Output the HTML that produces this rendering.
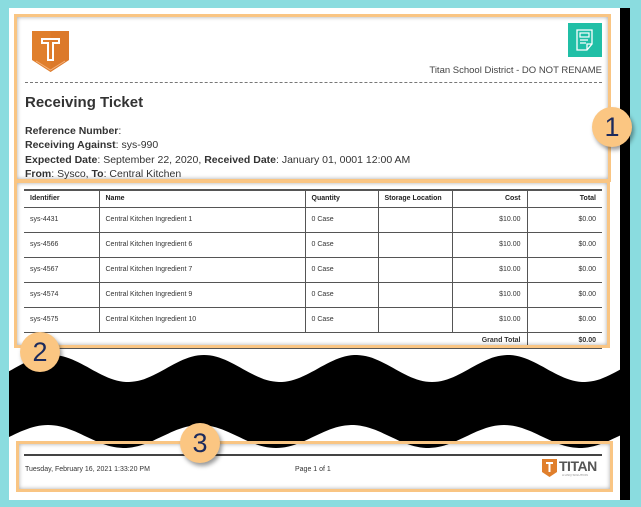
<!DOCTYPE html>
<html><head><meta charset="utf-8"><style>
*{margin:0;padding:0;box-sizing:border-box}
body{width:641px;height:507px;background:#8adcdf;position:relative;overflow:hidden;font-family:"Liberation Sans",Arial,sans-serif;color:#333}
.abs{position:absolute}
.page{left:9px;top:8px;width:612px;height:492px;background:#fff}
.blk{left:620px;top:8px;width:10px;height:492px;background:#000}
.box{border:3px solid #f9c583;box-shadow:0 0 4px rgba(0,0,0,.35) inset}
.circ{width:40px;height:40px;border-radius:50%;background:#fbc682;color:#1c2a5c;font-size:27px;text-align:center;line-height:40px;box-shadow:2px 3px 4px rgba(0,0,0,.4)}
.info{left:25px;font-size:10.5px;color:#333}
.info b{color:#333}
table{border-collapse:collapse;font-size:7px;color:#333}
td,th{height:25px;padding:0 6px;border-bottom:1px solid #555}
th{height:17px;text-align:left;font-weight:bold;color:#222}
td+td,th+th{border-left:1px solid #555}
.r{text-align:right}
</style></head><body>
<div class="abs page"></div>
<div class="abs blk"></div>

<!-- logo -->
<svg class="abs" style="left:31px;top:30px" width="39" height="43" viewBox="0 0 39 43">
<path d="M1 1H38V30L19.5 42L1 30Z" fill="#e07f2c"/>
<path d="M19.5 1H38V30L19.5 42Z" fill="#d8752a" opacity=".6"/>
<path d="M11 9H28V13H22V30H17V13H11Z" fill="none" stroke="#fff" stroke-width="2"/>
<path d="M5 31L19.5 40L34 31" fill="none" stroke="#f3b07a" stroke-width="1"/>
</svg>
<!-- teal icon -->
<div class="abs" style="left:568px;top:23px;width:34px;height:34px;background:#20bfa6"></div>
<svg class="abs" style="left:568px;top:23px" width="34" height="34" viewBox="0 0 34 34">
<path d="M9 7H24V21L19 27H9Z M19 27V21H24" fill="none" stroke="#fff" stroke-width="1.3"/>
<rect x="12" y="10" width="9" height="4" fill="none" stroke="#fff" stroke-width="1.2"/>
<path d="M12 17H20M12 20H18" stroke="#fff" stroke-width="1.2"/>
</svg>
<div class="abs" style="right:39px;top:65px;font-size:9.5px;color:#444">Titan School District - DO NOT RENAME</div>
<div class="abs" style="left:25px;top:82px;width:577px;border-top:1px dashed #777"></div>
<div class="abs" style="left:25px;top:94px;font-size:15px;font-weight:bold;color:#333">Receiving Ticket</div>
<div class="abs info" style="top:125px"><b>Reference Number</b>:</div>
<div class="abs info" style="top:139px"><b>Receiving Against</b>: sys-990</div>
<div class="abs info" style="top:154px"><b>Expected Date</b>: September 22, 2020, <b>Received Date</b>: January 01, 0001 12:00 AM</div>
<div class="abs info" style="top:168px"><b>From</b>: Sysco, <b>To</b>: Central Kitchen</div>

<table class="abs" style="left:24px;top:189px;width:578px;border-top:2px solid #555">
<tr><th style="width:75px">Identifier</th><th style="width:206px">Name</th><th style="width:73px">Quantity</th><th style="width:74px">Storage Location</th><th class="r" style="width:75px">Cost</th><th class="r">Total</th></tr>
<tr><td>sys-4431</td><td>Central Kitchen Ingredient 1</td><td>0 Case</td><td></td><td class="r">$10.00</td><td class="r">$0.00</td></tr>
<tr><td>sys-4566</td><td>Central Kitchen Ingredient 6</td><td>0 Case</td><td></td><td class="r">$10.00</td><td class="r">$0.00</td></tr>
<tr><td>sys-4567</td><td>Central Kitchen Ingredient 7</td><td>0 Case</td><td></td><td class="r">$10.00</td><td class="r">$0.00</td></tr>
<tr><td>sys-4574</td><td>Central Kitchen Ingredient 9</td><td>0 Case</td><td></td><td class="r">$10.00</td><td class="r">$0.00</td></tr>
<tr><td>sys-4575</td><td>Central Kitchen Ingredient 10</td><td>0 Case</td><td></td><td class="r">$10.00</td><td class="r">$0.00</td></tr>
<tr><td colspan="5" class="r" style="height:16px;border-left:none"><b>Grand Total</b></td><td class="r" style="height:16px"><b>$0.00</b></td></tr>
</table>

<!-- footer -->
<div class="abs" style="left:24px;top:454px;width:578px;border-top:2px solid #444"></div>
<div class="abs" style="left:25px;top:466px;font-size:7px;color:#333">Tuesday, February 16, 2021 1:33:20 PM</div>
<div class="abs" style="left:295px;top:466px;font-size:7px;color:#333">Page 1 of 1</div>
<svg class="abs" style="left:542px;top:459px" width="15" height="18" viewBox="0 0 15 18"><path d="M0 0H15V13L7.5 18L0 13Z" fill="#e07f2c"/><path d="M4 3H11V5H8.5V13H6.5V5H4Z" fill="#fff"/></svg>
<div class="abs" style="left:559px;top:458px;font-size:14px;font-weight:bold;color:#555;letter-spacing:-0.5px">TITAN</div>
<div class="abs" style="left:562px;top:473px;font-size:3px;color:#888">A LINQ SOLUTION</div>

<!-- wave -->
<svg class="abs" style="left:0;top:340px" width="641" height="120" viewBox="0 340 641 120">
<path id="w" fill="#000" d=""/>
</svg>
<script>
(function(){var P=152,f=function(x){return 368.5-13.5*Math.cos(2*Math.PI*(x-204)/P)},g=function(x){return 436.5-11.5*Math.cos(2*Math.PI*(x-200)/P)};
var d="M9 "+f(9).toFixed(1);
for(var x=9;x<=630;x+=3){d+=" L"+x+" "+f(x).toFixed(1);}
for(var x=630;x>=9;x-=3){d+=" L"+x+" "+g(x).toFixed(1);}
d+="Z";document.getElementById('w').setAttribute('d',d);})();
</script>

<!-- annotation boxes -->
<div class="abs box" style="left:14px;top:14px;width:597px;height:168px"></div>
<div class="abs box" style="left:14px;top:180px;width:596px;height:168px"></div>
<div class="abs box" style="left:16px;top:441px;width:597px;height:51px"></div>
<div class="abs circ" style="left:592px;top:107px">1</div>
<div class="abs circ" style="left:20px;top:332px">2</div>
<div class="abs circ" style="left:180px;top:423px">3</div>
</body></html>
